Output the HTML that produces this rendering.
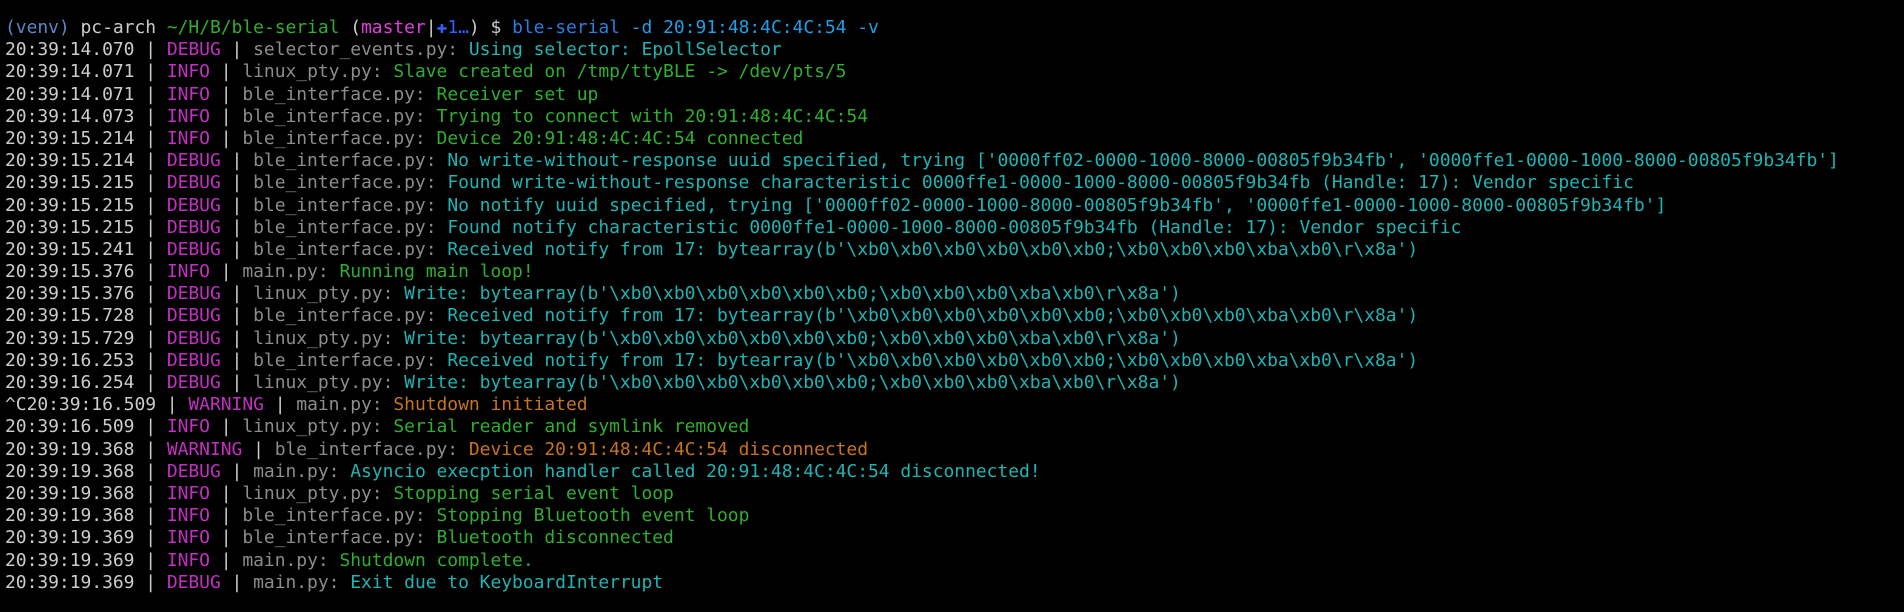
<!DOCTYPE html>
<html><head><meta charset="utf-8"><style>
html,body{margin:0;padding:0;background:#000;width:1904px;height:612px;overflow:hidden}
pre{margin:0;padding:17px 0 0 5px;font-family:"DejaVu Sans Mono","Liberation Mono",monospace;font-size:18px;line-height:22.18px;color:#cccccc;letter-spacing:-0.05px}
.m{color:#c22fc2}.g{color:#8c8c8c}.c{color:#1fb3b3}.n{color:#2fae2f}.o{color:#c8731e}
.v{color:#5a86c8}.b{color:#2b7de0}.a{color:#1e9ee8}.p{color:#e040e0}.k{color:#3060ff}
</style></head><body><pre><span class="v">(venv)</span> pc-arch <span class="n">~/H/B/ble-serial</span> (<span class="p">master</span>|<span class="k">✚1…</span>) $ <span class="b">ble-serial</span> <span class="a">-d 20:91:48:4C:4C:54 -v</span>
20:39:14.070 | <span class="m">DEBUG</span> | <span class="g">selector_events.py:</span> <span class="c">Using selector: EpollSelector</span>
20:39:14.071 | <span class="m">INFO</span> | <span class="g">linux_pty.py:</span> <span class="n">Slave created on /tmp/ttyBLE -&gt; /dev/pts/5</span>
20:39:14.071 | <span class="m">INFO</span> | <span class="g">ble_interface.py:</span> <span class="n">Receiver set up</span>
20:39:14.073 | <span class="m">INFO</span> | <span class="g">ble_interface.py:</span> <span class="n">Trying to connect with 20:91:48:4C:4C:54</span>
20:39:15.214 | <span class="m">INFO</span> | <span class="g">ble_interface.py:</span> <span class="n">Device 20:91:48:4C:4C:54 connected</span>
20:39:15.214 | <span class="m">DEBUG</span> | <span class="g">ble_interface.py:</span> <span class="c">No write-without-response uuid specified, trying ['0000ff02-0000-1000-8000-00805f9b34fb', '0000ffe1-0000-1000-8000-00805f9b34fb']</span>
20:39:15.215 | <span class="m">DEBUG</span> | <span class="g">ble_interface.py:</span> <span class="c">Found write-without-response characteristic 0000ffe1-0000-1000-8000-00805f9b34fb (Handle: 17): Vendor specific</span>
20:39:15.215 | <span class="m">DEBUG</span> | <span class="g">ble_interface.py:</span> <span class="c">No notify uuid specified, trying ['0000ff02-0000-1000-8000-00805f9b34fb', '0000ffe1-0000-1000-8000-00805f9b34fb']</span>
20:39:15.215 | <span class="m">DEBUG</span> | <span class="g">ble_interface.py:</span> <span class="c">Found notify characteristic 0000ffe1-0000-1000-8000-00805f9b34fb (Handle: 17): Vendor specific</span>
20:39:15.241 | <span class="m">DEBUG</span> | <span class="g">ble_interface.py:</span> <span class="c">Received notify from 17: bytearray(b'\xb0\xb0\xb0\xb0\xb0\xb0;\xb0\xb0\xb0\xba\xb0\r\x8a')</span>
20:39:15.376 | <span class="m">INFO</span> | <span class="g">main.py:</span> <span class="n">Running main loop!</span>
20:39:15.376 | <span class="m">DEBUG</span> | <span class="g">linux_pty.py:</span> <span class="c">Write: bytearray(b'\xb0\xb0\xb0\xb0\xb0\xb0;\xb0\xb0\xb0\xba\xb0\r\x8a')</span>
20:39:15.728 | <span class="m">DEBUG</span> | <span class="g">ble_interface.py:</span> <span class="c">Received notify from 17: bytearray(b'\xb0\xb0\xb0\xb0\xb0\xb0;\xb0\xb0\xb0\xba\xb0\r\x8a')</span>
20:39:15.729 | <span class="m">DEBUG</span> | <span class="g">linux_pty.py:</span> <span class="c">Write: bytearray(b'\xb0\xb0\xb0\xb0\xb0\xb0;\xb0\xb0\xb0\xba\xb0\r\x8a')</span>
20:39:16.253 | <span class="m">DEBUG</span> | <span class="g">ble_interface.py:</span> <span class="c">Received notify from 17: bytearray(b'\xb0\xb0\xb0\xb0\xb0\xb0;\xb0\xb0\xb0\xba\xb0\r\x8a')</span>
20:39:16.254 | <span class="m">DEBUG</span> | <span class="g">linux_pty.py:</span> <span class="c">Write: bytearray(b'\xb0\xb0\xb0\xb0\xb0\xb0;\xb0\xb0\xb0\xba\xb0\r\x8a')</span>
^C20:39:16.509 | <span class="m">WARNING</span> | <span class="g">main.py:</span> <span class="o">Shutdown initiated</span>
20:39:16.509 | <span class="m">INFO</span> | <span class="g">linux_pty.py:</span> <span class="n">Serial reader and symlink removed</span>
20:39:19.368 | <span class="m">WARNING</span> | <span class="g">ble_interface.py:</span> <span class="o">Device 20:91:48:4C:4C:54 disconnected</span>
20:39:19.368 | <span class="m">DEBUG</span> | <span class="g">main.py:</span> <span class="c">Asyncio execption handler called 20:91:48:4C:4C:54 disconnected!</span>
20:39:19.368 | <span class="m">INFO</span> | <span class="g">linux_pty.py:</span> <span class="n">Stopping serial event loop</span>
20:39:19.368 | <span class="m">INFO</span> | <span class="g">ble_interface.py:</span> <span class="n">Stopping Bluetooth event loop</span>
20:39:19.369 | <span class="m">INFO</span> | <span class="g">ble_interface.py:</span> <span class="n">Bluetooth disconnected</span>
20:39:19.369 | <span class="m">INFO</span> | <span class="g">main.py:</span> <span class="n">Shutdown complete.</span>
20:39:19.369 | <span class="m">DEBUG</span> | <span class="g">main.py:</span> <span class="c">Exit due to KeyboardInterrupt</span></pre></body></html>
